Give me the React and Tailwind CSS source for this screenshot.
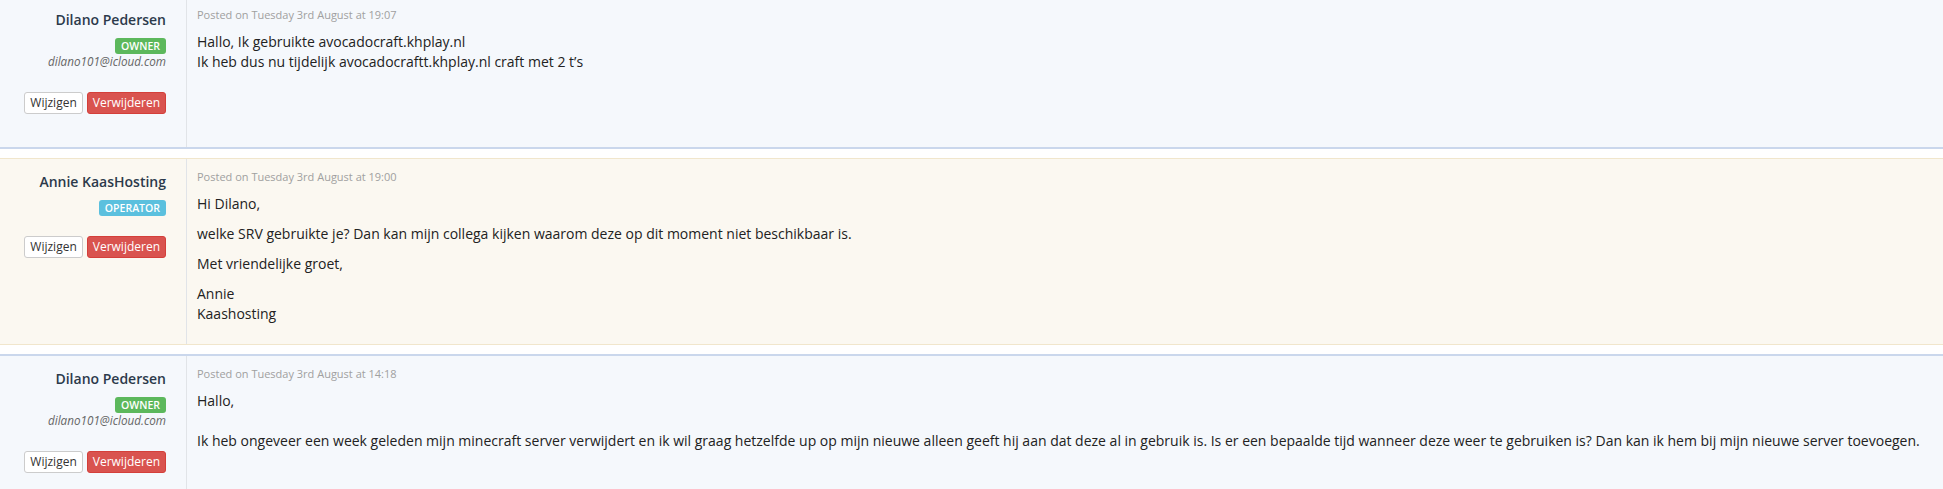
import React from 'react';

const replies = [
  {
    name: 'Dilano Pedersen',
    role: 'owner',
    email: 'dilano101@icloud.com',
    date: 'Tuesday 3rd August at 19:07',
    body: [['Hallo, Ik gebruikte avocadocraft.khplay.nl', 'Ik heb dus nu tijdelijk avocadocraftt.khplay.nl craft met 2 t’s']],
  },
  {
    name: 'Annie KaasHosting',
    role: 'operator',
    date: 'Tuesday 3rd August at 19:00',
    body: [
      ['Hi Dilano,'],
      ['welke SRV gebruikte je? Dan kan mijn collega kijken waarom deze op dit moment niet beschikbaar is.'],
      ['Met vriendelijke groet,'],
      ['Annie', 'Kaashosting'],
    ],
  },
  {
    name: 'Dilano Pedersen',
    role: 'owner',
    email: 'dilano101@icloud.com',
    date: 'Tuesday 3rd August at 14:18',
    body: [[
      'Hallo,',
      '',
      'Ik heb ongeveer een week geleden mijn minecraft server verwijdert en ik wil graag hetzelfde up op mijn nieuwe alleen geeft hij aan dat deze al in gebruik is. Is er een bepaalde tijd wanneer deze weer te gebruiken is? Dan kan ik hem bij mijn nieuwe server toevoegen.',
    ]],
  },
];

const Badge = ({ role }) => (
  <span
    className={`inline-block h-4 px-[6px] rounded-[3px] text-[10.5px] leading-4 font-semibold uppercase text-white ${
      role === 'operator' ? 'bg-[#5bc0de]' : 'bg-[#5cb85c]'
    }`}
  >
    {role}
  </span>
);

const Reply = ({ reply }) => {
  const staff = reply.role === 'operator';
  return (
    <div
      className={`flex mb-[9px] ${
        staff ? 'bg-[#fbf8f1] border-y border-[#f1e6cc]' : 'bg-[#f5f8fc] border-y-2 border-[#cad7ec]'
      }`}
    >
      {/* Author */}
      <div className="w-[187px] shrink-0 border-r border-[#e1e4e8] pt-[13px] pb-[33px] pr-5 text-right">
        <div className="text-[14px] leading-5 font-semibold text-[#2c3a4b]">{reply.name}</div>
        <div className="mt-[6px] h-4 leading-4">
          <Badge role={reply.role} />
        </div>
        {reply.email && (
          <div className="text-[11.7px] leading-[18px] italic text-[#666]">{reply.email}</div>
        )}
        <div className="mt-[22px] flex justify-end gap-1">
          <button className="h-[22px] px-[5px] text-[12px] leading-5 text-[#333] bg-white border border-[#ccc] rounded-[3px]">
            Wijzigen
          </button>
          <button className="h-[22px] px-[5px] text-[12px] leading-5 text-white bg-[#d9534f] border border-[#d43f3a] rounded-[3px]">
            Verwijderen
          </button>
        </div>
      </div>

      {/* Message */}
      <div className="flex-1 min-w-0 pt-[10px] pb-[10px] pl-[10px] pr-[8px]">
        <div className="text-[11px] leading-4 text-[#a0a0a0] mb-[9px]">Posted on {reply.date}</div>
        {reply.body.map((para, i) => (
          <p key={i} className="text-[14px] leading-5 text-[#222] mb-[10px]">
            {para.map((line, j) => (
              <React.Fragment key={j}>
                {j > 0 && <br />}
                {line}
              </React.Fragment>
            ))}
          </p>
        ))}
      </div>
    </div>
  );
};

export default function App() {
  return (
    <div className="w-[1943px] h-[489px] overflow-hidden bg-white font-['Open_Sans',sans-serif]">
      <div className="-mt-[5px]">
        {replies.map((r, i) => (
          <Reply key={i} reply={r} />
        ))}
      </div>
    </div>
  );
}
